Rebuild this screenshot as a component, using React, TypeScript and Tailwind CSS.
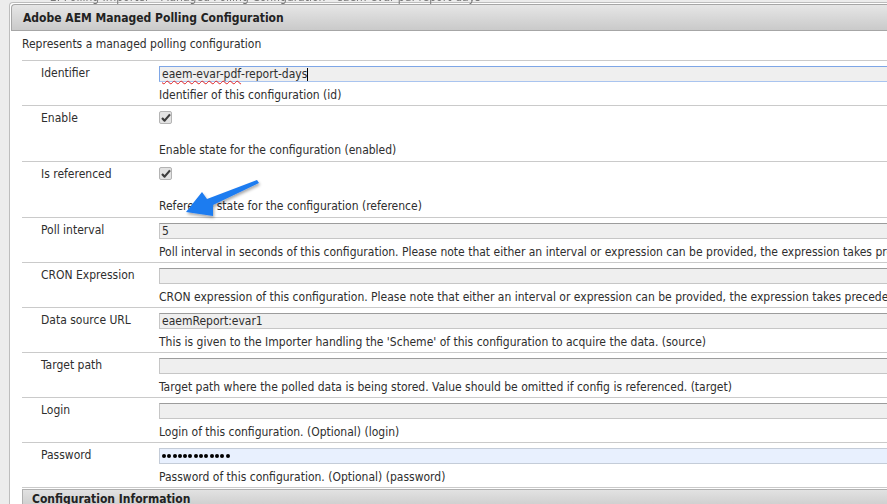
import React from 'react'

const font = { fontFamily: '"DejaVu Sans Condensed", Tahoma, "Liberation Sans", sans-serif' }

type Field = {
  label: string
  help: string
  kind: 'text' | 'check' | 'password'
  value?: string
}

const fields: Field[] = [
  { label: 'Enable', kind: 'check', help: 'Enable state for the configuration (enabled)' },
  { label: 'Is referenced', kind: 'check', help: 'Reference state for the configuration (reference)' },
  {
    label: 'Poll interval',
    kind: 'text',
    value: '5',
    help: 'Poll interval in seconds of this configuration. Please note that either an interval or expression can be provided, the expression takes precedence. (interval)',
  },
  {
    label: 'CRON Expression',
    kind: 'text',
    help: 'CRON expression of this configuration. Please note that either an interval or expression can be provided, the expression takes precedence. (cronExpression)',
  },
  {
    label: 'Data source URL',
    kind: 'text',
    value: 'eaemReport:evar1',
    help: "This is given to the Importer handling the 'Scheme' of this configuration to acquire the data. (source)",
  },
  {
    label: 'Target path',
    kind: 'text',
    help: 'Target path where the polled data is being stored. Value should be omitted if config is referenced. (target)',
  },
  { label: 'Login', kind: 'text', help: 'Login of this configuration. (Optional) (login)' },
  { label: 'Password', kind: 'password', help: 'Password of this configuration. (Optional) (password)' },
]

function Checkbox() {
  return (
    <div className="w-[13px] h-[13px] rounded-[2px] border border-[#b4b4b4] bg-[#e2e2e2] flex items-center justify-center">
      <svg width="10" height="9" viewBox="0 0 10 9">
        <path d="M1 5 L3.6 7.6 L9 1.4" fill="none" stroke="#3c3c3c" strokeWidth="2.2" strokeLinejoin="round" />
      </svg>
    </div>
  )
}

function Help({ text }: { text: string }) {
  return <div className="leading-[15px] whitespace-nowrap text-[#2e2e2e]">{text}</div>
}

function Row({ f }: { f: Field }) {
  const isCheck = f.kind === 'check'
  return (
    <div className={`flex border-t border-[#cacaca] ${isCheck ? 'h-[56px]' : 'h-[45px]'}`}>
      <div className="w-[137px] shrink-0 pl-[19px] pt-[5px] leading-[15px] text-[#2e2e2e]">{f.label}</div>
      <div className="flex-1 min-w-0 pt-[5px]">
        {isCheck ? (
          <>
            <Checkbox />
            <div className="mt-[19px]">
              <Help text={f.help} />
            </div>
          </>
        ) : (
          <>
            {f.kind === 'password' ? (
              <div className="h-[16px] border border-[#c4ccd8] bg-[#e8f0fe] flex items-center gap-[1.3px] pl-[2px]">
                {Array.from({ length: 13 }).map((_, i) => (
                  <span key={i} className="w-[4px] h-[4px] rounded-full bg-black" />
                ))}
              </div>
            ) : (
              <div className="h-[16px] border border-[#c6c6c6] border-t-[#9c9c9c] bg-[#efefef] flex items-center pl-[2px] leading-[14px] text-[#2e2e2e]">
                {f.value}
              </div>
            )}
            <div className="mt-[6px]">
              <Help text={f.help} />
            </div>
          </>
        )}
      </div>
    </div>
  )
}

export default function App() {
  return (
    <div className="relative w-[887px] h-[504px] overflow-hidden bg-[#ececec] text-[12px] flex" style={font}>
      <div className="absolute left-[50px] top-[-12px] text-[12px] text-[#777] whitespace-nowrap blur-[0.5px]">
        2. Polling Importer - Managed Polling Configuration - eaem-evar-pdf-report-days
      </div>
      <div className="w-[9px] shrink-0" />
      <div className="flex-1 mt-[2px] border-l border-t border-[#bdbdbd] rounded-tl-[4px] bg-white pl-[1px] pt-[1px]">
        <div className="h-[27px] border border-r-0 border-[#a6a6a6] rounded-tl-[4px] bg-gradient-to-b from-[#e6e6e6] to-[#cacaca] pl-[11px] flex items-center font-bold text-[#222]">
          Adobe AEM Managed Polling Configuration
        </div>
        <div className="ml-[11px]">
          <div className="pt-[6px] pb-[8px] leading-[15px] text-[#2e2e2e]">Represents a managed polling configuration</div>

          {/* Identifier */}
          <div className="flex h-[45px] border-t border-[#cacaca]">
            <div className="w-[137px] shrink-0 pl-[19px] pt-[5px] leading-[15px] text-[#2e2e2e]">Identifier</div>
            <div className="flex-1 min-w-0 pt-[5px]">
              <div className="h-[16px] border border-[#7ea6e6] border-b-[#a9c4ef] bg-[#efefef] flex items-center pl-[2px] leading-[14px] text-[#2e2e2e]">
                <span className="underline decoration-wavy decoration-[#e02020] decoration-1 underline-offset-2">eaem-evar-pdf</span>
                <span>-report-days</span>
                <span className="w-px h-[13px] bg-black" />
              </div>
              <div className="mt-[6px]">
                <Help text="Identifier of this configuration (id)" />
              </div>
            </div>
          </div>

          {fields.map((f) => (
            <Row key={f.label} f={f} />
          ))}

          <div className="border-t border-[#cacaca] pt-[1px]">
            <div className="h-[20px] border border-r-0 border-[#b0b0b0] bg-gradient-to-b from-[#e2e2e2] to-[#cbcbcb] pl-[9px] flex items-center font-bold text-[#222]">
              Configuration Information
            </div>
          </div>
        </div>
      </div>

      {/* annotation arrow */}
      <svg className="absolute left-0 top-0" width="887" height="504" viewBox="0 0 887 504">
        <defs>
          <filter id="sh" x="-20%" y="-20%" width="140%" height="140%">
            <feDropShadow dx="1" dy="2" stdDeviation="1.5" floodColor="#000" floodOpacity="0.35" />
          </filter>
        </defs>
        <polygon
          points="257,180 259,183 213,205 213,216 186,212 202,192 207,199"
          fill="#1f7bf0"
          filter="url(#sh)"
        />
      </svg>
    </div>
  )
}
